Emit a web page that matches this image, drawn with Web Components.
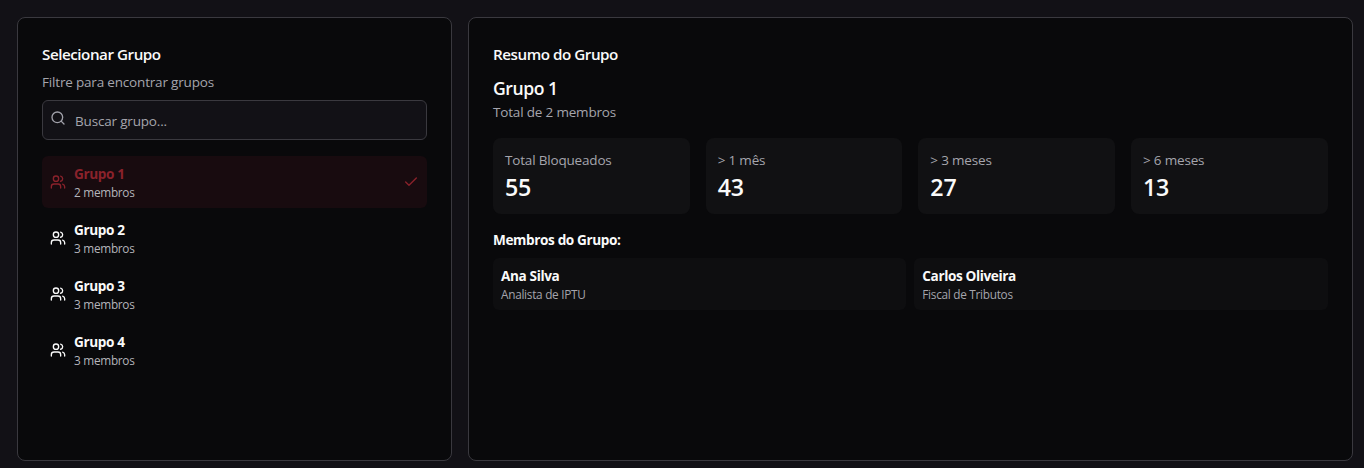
<!DOCTYPE html>
<html lang="pt-BR">
<head>
<meta charset="utf-8">
<title>Grupos</title>
<style>
html,body{margin:0;height:100%;background:#121116}
body{font-family:"Segoe UI","Open Sans","Noto Sans",sans-serif;color:#fafafa;overflow:hidden}
</style>
</head>
<body>
<groups-page></groups-page>
<script>
const define = (name, html) => {
  const tpl = document.createElement('template');
  tpl.innerHTML = html;
  customElements.define(name, class extends HTMLElement {
    constructor() {
      super();
      this.attachShadow({mode: 'open'}).append(tpl.content.cloneNode(true));
    }
  });
};

// One line of text: size, leading, weight and tracking come from its variant.
define('text-line', `<style>
:host{display:block;white-space:nowrap;color:#fafafa;font-weight:600}
:host([v=title]){font-size:15.2px;line-height:24px;letter-spacing:-.46px}
:host([v=heading]){font-size:17.6px;line-height:29px;height:28px;letter-spacing:-.46px}
:host([v=body]){font-size:13.5px;line-height:20px;font-weight:400;color:#a5a5ad;letter-spacing:-.18px}
:host([v=name]){font-size:13.6px;line-height:20px;font-weight:700;letter-spacing:-.38px}
:host([v=small]){font-size:11.8px;line-height:17px;height:16px;font-weight:400;color:#a5a5ad;letter-spacing:-.28px}
:host([v=value]){font-size:23.2px;line-height:34px;height:32px;font-weight:600;letter-spacing:-.15px}
</style><slot></slot>`);

define('line-icon', `<style>
:host{display:block;width:16px;height:16px;flex:none}
svg{display:none;width:16px;height:16px;fill:none;stroke:currentColor;stroke-width:2;stroke-linecap:round;stroke-linejoin:round}
:host([kind=users]) .users,:host([kind=search]) .search,:host([kind=check]) .check{display:block}
</style>
<svg class="users" viewBox="0 0 24 24"><path d="M16 21v-2a4 4 0 0 0-4-4H6a4 4 0 0 0-4 4v2"/><circle cx="9" cy="7" r="4"/><path d="M22 21v-2a4 4 0 0 0-3-3.87M16 3.13a4 4 0 0 1 0 7.75"/></svg>
<svg class="search" viewBox="0 0 24 24"><circle cx="11" cy="11" r="8"/><path d="m21 21-4.3-4.3"/></svg>
<svg class="check" viewBox="0 0 24 24"><path d="M20 6 9 17l-5-5"/></svg>`);

define('panel-card', `<style>
:host{display:block;box-sizing:border-box;min-width:0;padding:24px;background:#09090b;border:1px solid #3a393f;border-radius:8px}
</style><slot></slot>`);

define('search-box', `<style>
:host{display:flex;box-sizing:border-box;height:40px;padding:0 8px 0 7px;gap:9px;border:1px solid #3a393f;border-radius:6px;background:#121116;color:#a1a1aa}
line-icon{margin-top:9px}
text-line{margin-top:10px}
</style><line-icon kind="search"></line-icon><text-line v="body"><slot></slot></text-line>`);

define('group-row', `<style>
:host{display:flex;align-items:center;gap:8px;padding:8px;border-radius:6px;color:#fafafa}
:host([selected]){background:#180b0f;color:#8a222b}
:host([selected]) .name{color:#8a222b}
.copy{flex:1}
.check{display:none}
:host([selected]) .check{display:block}
.sub{color:#b4b4bb}
</style><line-icon kind="users"></line-icon>
<div class="copy"><text-line class="name" v="name"><slot></slot></text-line><text-line class="sub" v="small"><slot name="count"></slot></text-line></div>
<line-icon class="check" kind="check"></line-icon>`);

define('stat-tile', `<style>
:host{display:block;padding:12px;border-radius:8px;background:#111113}
</style><text-line v="body"><slot></slot></text-line><text-line v="value"><slot name="value"></slot></text-line>`);

define('member-tile', `<style>
:host{display:block;padding:8px;border-radius:6px;background:#0e0e10}
</style><text-line v="name"><slot></slot></text-line><text-line v="small"><slot name="role"></slot></text-line>`);

define('groups-page', `<style>
:host{display:grid;box-sizing:border-box;grid-template-columns:435px 884.6px;gap:16px;height:461px;padding:17px 0 0 17px}
.hint{margin:6px 0 8px}
.list{display:grid;gap:4px;margin-top:16px}
.head{margin-top:8px}
.stats{display:grid;grid-template-columns:repeat(4,1fr);gap:16px;margin:16px 0}
.members{display:grid;grid-template-columns:repeat(2,1fr);gap:8px;margin-top:8px}
</style>
<panel-card>
  <text-line v="title">Selecionar Grupo</text-line>
  <text-line v="body" class="hint">Filtre para encontrar grupos</text-line>
  <search-box>Buscar grupo...</search-box>
  <div class="list">
    <group-row selected>Grupo 1<span slot="count">2 membros</span></group-row>
    <group-row>Grupo 2<span slot="count">3 membros</span></group-row>
    <group-row>Grupo 3<span slot="count">3 membros</span></group-row>
    <group-row>Grupo 4<span slot="count">3 membros</span></group-row>
  </div>
</panel-card>
<panel-card>
  <text-line v="title">Resumo do Grupo</text-line>
  <text-line v="heading" class="head">Grupo 1</text-line>
  <text-line v="body">Total de 2 membros</text-line>
  <div class="stats">
    <stat-tile>Total Bloqueados<span slot="value">55</span></stat-tile>
    <stat-tile>&gt; 1 mês<span slot="value">43</span></stat-tile>
    <stat-tile>&gt; 3 meses<span slot="value">27</span></stat-tile>
    <stat-tile>&gt; 6 meses<span slot="value">13</span></stat-tile>
  </div>
  <text-line v="name">Membros do Grupo:</text-line>
  <div class="members">
    <member-tile>Ana Silva<span slot="role">Analista de IPTU</span></member-tile>
    <member-tile>Carlos Oliveira<span slot="role">Fiscal de Tributos</span></member-tile>
  </div>
</panel-card>`);
</script>
</body>
</html>
